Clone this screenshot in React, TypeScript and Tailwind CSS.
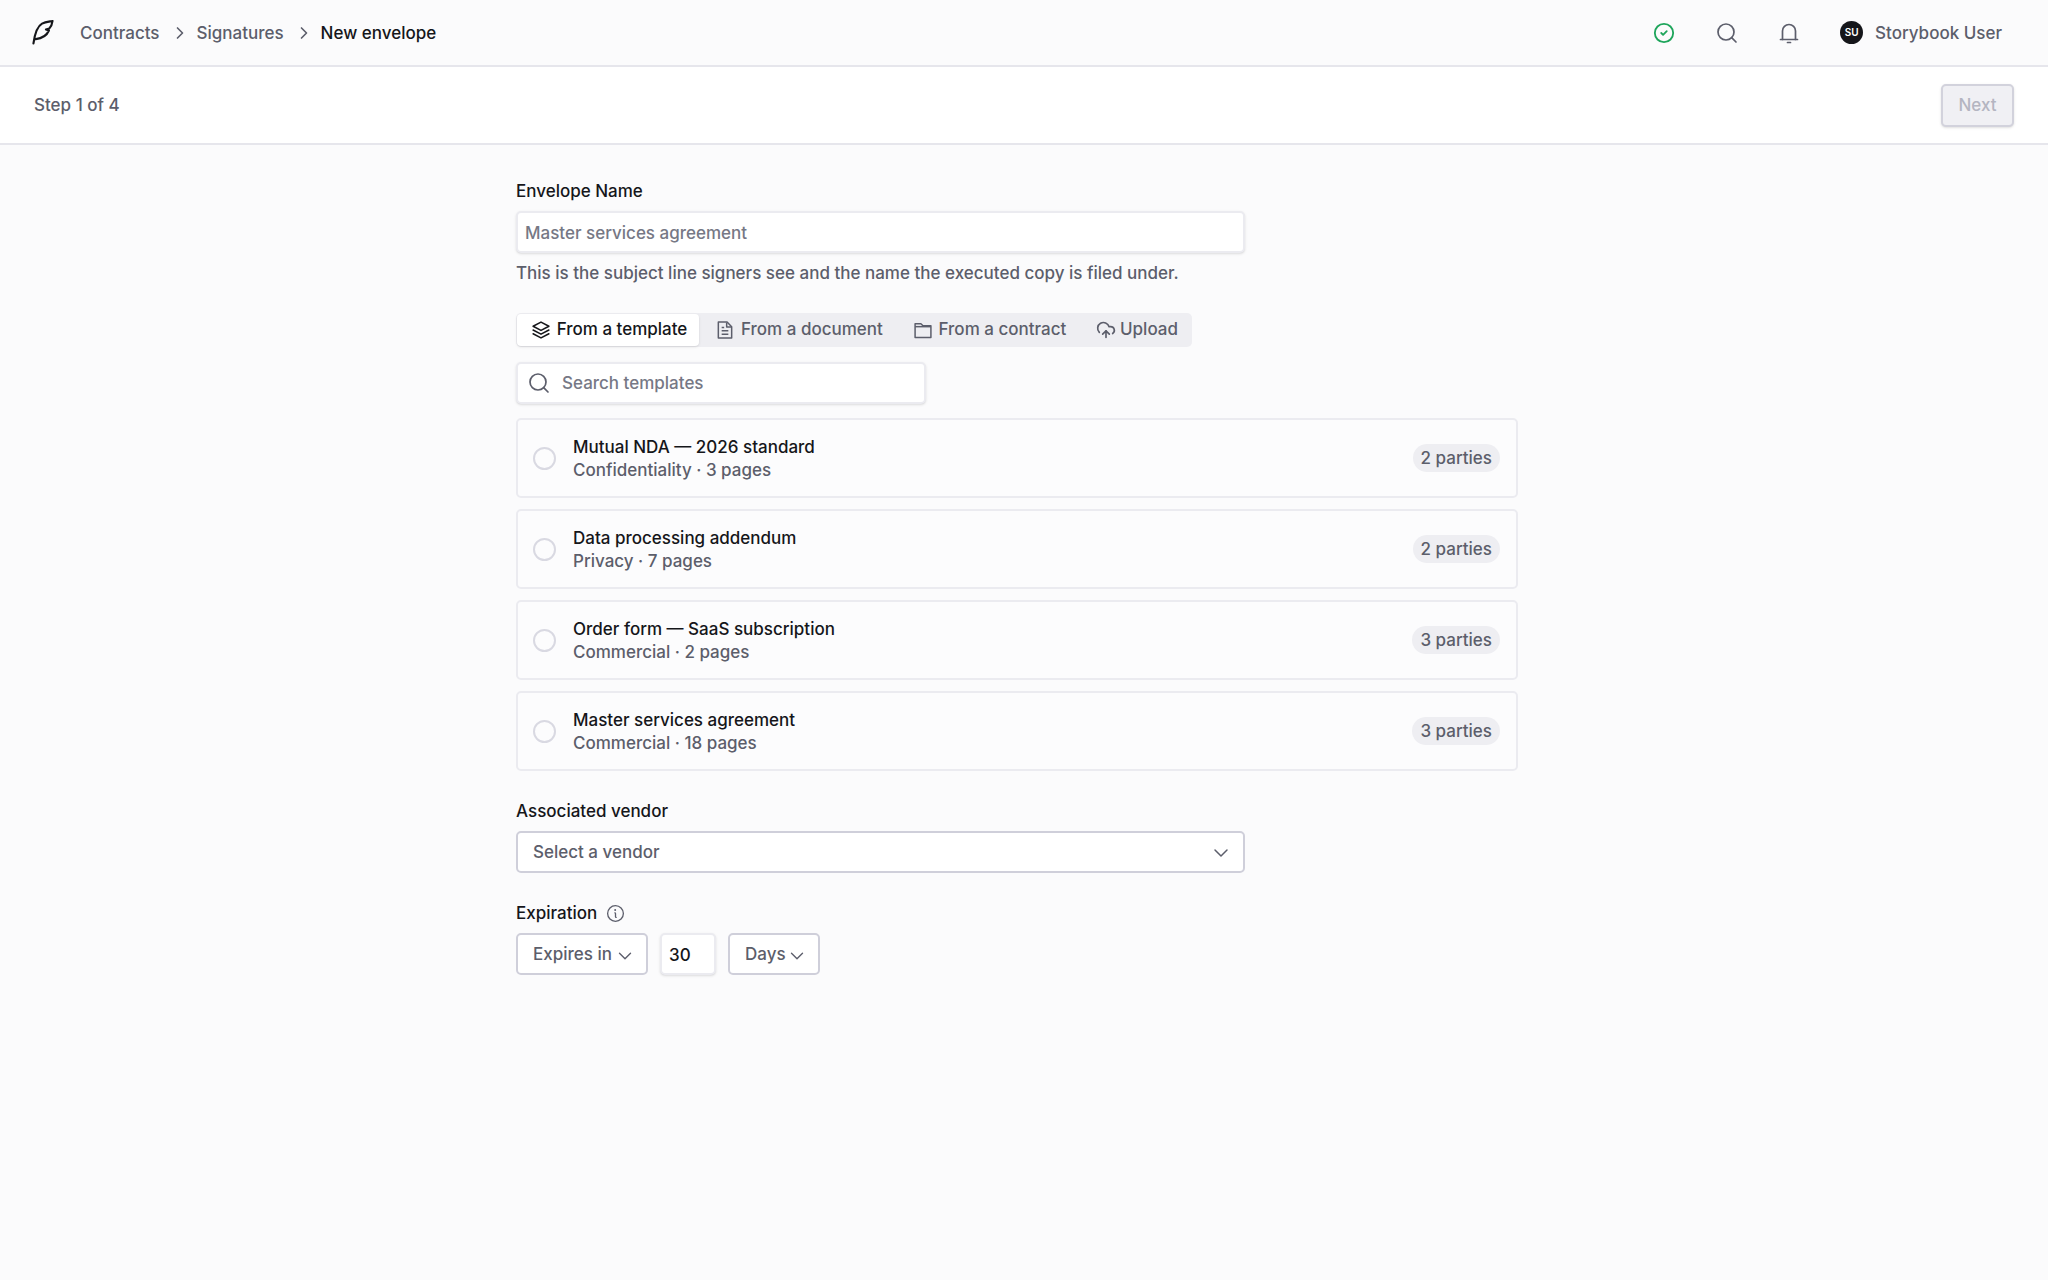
import { ChevronDown, ChevronRight, CircleCheck, CloudUpload, Search } from 'lucide-react';
import { PiInfo } from 'react-icons/pi';

const templates = [
  { name: 'Mutual NDA — 2026 standard', meta: 'Confidentiality · 3 pages', parties: '2 parties' },
  { name: 'Data processing addendum', meta: 'Privacy · 7 pages', parties: '2 parties' },
  { name: 'Order form — SaaS subscription', meta: 'Commercial · 2 pages', parties: '3 parties' },
  { name: 'Master services agreement', meta: 'Commercial · 18 pages', parties: '3 parties' },
];

function Quill() {
  return (
    <svg viewBox="36 30 66 76" className="h-[25px] w-[22px]" fill="none" stroke="currentColor" strokeWidth="6.5" strokeLinejoin="round" strokeLinecap="round">
      <path d="M40 101C44 72 50 50 66 41C76 36 88 35 98 33C97 42 94 50 88 56L78 59L87 62C80 78 66 86 47 88" />
    </svg>
  );
}

function Bell() {
  return (
    <svg viewBox="0 0 24 24" className="h-[24px] w-[24px]" fill="none" stroke="currentColor" strokeWidth="1.7" strokeLinecap="round" strokeLinejoin="round">
      <path d="M3.5 18.5h17" />
      <path d="M5.5 18.5V10a6.5 6.5 0 0 1 13 0v8.5" />
      <path d="M10.5 21.5h3" />
    </svg>
  );
}

function Stack() {
  return (
    <svg viewBox="0 0 24 24" className="h-[20px] w-[20px]" fill="none" stroke="currentColor" strokeWidth="1.8" strokeLinecap="round" strokeLinejoin="round">
      <path d="M12 2.5l9.5 5-9.5 5-9.5-5z" />
      <path d="M2.5 12l9.5 5 9.5-5" />
      <path d="M2.5 16.5l9.5 5 9.5-5" />
    </svg>
  );
}

function DocIcon() {
  return (
    <svg viewBox="0 0 24 24" className="h-[20px] w-[20px]" fill="none" stroke="currentColor" strokeWidth="1.8" strokeLinejoin="round">
      <path d="M4 2.5h10.5L20 8v13.5H4z" />
      <path d="M14 3v5.5h5.5" />
      <path d="M8 9h3M8 13h8M8 17h8" />
    </svg>
  );
}

function FolderIcon() {
  return (
    <svg viewBox="0 0 24 24" className="h-[20px] w-[20px]" fill="none" stroke="currentColor" strokeWidth="1.8" strokeLinejoin="round">
      <path d="M2.5 4.5h7l2.5 2.5h9.5v14h-19z" />
      <path d="M2.5 8h19" />
    </svg>
  );
}

function Crumb({ label }: { label: string }) {
  return (
    <>
      <span className="pt-[2px] text-[#5c5e6b]">{label}</span>
      <ChevronRight size={20} strokeWidth={2} className="ml-[10px] mr-[7px] text-[#5c5e6b]" />
    </>
  );
}

export default function App() {
  return (
    <div className="flex min-h-[1280px] flex-col bg-[#fbfbfc] font-['Inter',sans-serif] text-[17px] font-medium text-[#15161a]">
      <header className="flex h-[67px] items-center justify-between border-b-2 border-[#e6e6ec] pl-[32px] pr-[46px]">
        <div className="flex items-center">
          <span className="mr-[26px]"><Quill /></span>
          <Crumb label="Contracts" />
          <Crumb label="Signatures" />
          <span className="pt-[2px]">New envelope</span>
        </div>
        <div className="flex items-center text-[#5c5e6b]">
          <CircleCheck size={22} strokeWidth={2} className="text-[#1ea55b]" />
          <Search size={24} strokeWidth={1.7} className="ml-[40px]" />
          <span className="ml-[38px]"><Bell /></span>
          <div className="ml-[39px] flex h-[23px] w-[23px] items-center justify-center rounded-full bg-[#15161a] text-[10px] font-semibold text-white">SU</div>
          <span className="ml-[12px] pt-[2px]">Storybook User</span>
        </div>
      </header>

      <div className="flex h-[78px] items-center justify-between border-b-2 border-[#e6e6ec] bg-white px-[34px]">
        <span className="pt-[2px] text-[#5c5e6b]">Step 1 of 4</span>
        <button className="h-[43px] w-[73px] rounded-[5px] border-2 border-[#d2d2dc] bg-[#f0f0f4] pt-[2px] text-[#b4b5c1] shadow-sm">Next</button>
      </div>

      <main className="ml-[516px] flex w-[1002px] flex-col pt-[34px]">
        <label className="leading-[24px]">Envelope Name</label>
        <div className="mt-[8px] flex h-[42px] w-[729px] items-center rounded-[5px] border-2 border-[#ebebf0] bg-white px-[7px] pt-[3px] text-[#767885] shadow-sm">Master services agreement</div>
        <p className="mt-[8px] leading-[24px] text-[#5c5e6b]">This is the subject line signers see and the name the executed copy is filed under.</p>

        <div className="mt-[28px] flex h-[34px] w-[676px] items-center rounded-[5px] bg-[#eeeef2] p-[1px] text-[#5c5e6b]">
          <div className="flex h-full w-[182px] items-center justify-center gap-[6px] rounded-[4px] bg-white pl-[2px] text-[#15161a] shadow-sm">
            <Stack />
            From a template
          </div>
          <div className="flex flex-1 items-center justify-between pl-[16px] pr-[13px]">
            <div className="flex items-center gap-[6px]"><DocIcon />From a document</div>
            <div className="flex items-center gap-[6px]"><FolderIcon />From a contract</div>
            <div className="flex items-center gap-[4px]"><CloudUpload size={20} strokeWidth={2} />Upload</div>
          </div>
        </div>

        <div className="mt-[15px] flex h-[42px] w-[410px] items-center rounded-[5px] border-2 border-[#ebebf0] bg-white pl-[9px] text-[#767885] shadow-sm">
          <Search size={24} strokeWidth={1.7} className="text-[#5c5e6b]" />
          <span className="ml-[11px] pt-[2px]">Search templates</span>
        </div>

        <div className="mt-[14px] flex flex-col gap-[11px]">
          {templates.map((t) => (
            <div key={t.name} className="flex h-[80px] items-center rounded-[5px] border-2 border-[#ebebf0] bg-[#fcfcfd] pl-[15px] pr-[16px]">
              <span className="h-[23px] w-[23px] rounded-full border-2 border-[#d9d9e2]" />
              <div className="ml-[17px] flex-1">
                <div className="leading-[23px]">{t.name}</div>
                <div className="leading-[22px] text-[#5c5e6b]">{t.meta}</div>
              </div>
              <span className="flex h-[28px] items-center rounded-full bg-[#eeeef2] px-[8px] pt-[1px] text-[#5c5e6b]">{t.parties}</span>
            </div>
          ))}
        </div>

        <label className="mt-[28px] leading-[24px]">Associated vendor</label>
        <div className="mt-[8px] flex h-[42px] w-[729px] items-center justify-between rounded-[5px] border-2 border-[#cfcfda] bg-white pl-[15px] pr-[10px] text-[#5c5e6b]">
          <span className="pt-[2px]">Select a vendor</span>
          <ChevronDown size={24} strokeWidth={1.5} className="mt-[2px]" />
        </div>

        <div className="mt-[28px] flex items-center leading-[24px]">
          Expiration
          <PiInfo className="ml-[8px] h-[21px] w-[21px] text-[#5c5e6b]" />
        </div>
        <div className="mt-[8px] flex items-center text-[#5c5e6b]">
          <div className="flex h-[42px] w-[132px] items-center gap-[2px] rounded-[5px] border-2 border-[#cfcfda] bg-white pl-[15px]">
            <span className="pt-[2px]">Expires in</span>
            <ChevronDown size={22} strokeWidth={1.5} className="mt-[3px]" />
          </div>
          <div className="ml-[12px] flex h-[42px] w-[56px] items-center rounded-[5px] border-2 border-[#ebebf0] bg-white pl-[7px] pt-[3px] text-[#15161a] shadow-sm">30</div>
          <div className="ml-[12px] flex h-[42px] w-[92px] items-center rounded-[5px] border-2 border-[#cfcfda] bg-white pl-[15px]">
            <span className="pt-[2px]">Days</span>
            <ChevronDown size={22} strokeWidth={1.5} className="mt-[3px]" />
          </div>
        </div>
      </main>
    </div>
  );
}
